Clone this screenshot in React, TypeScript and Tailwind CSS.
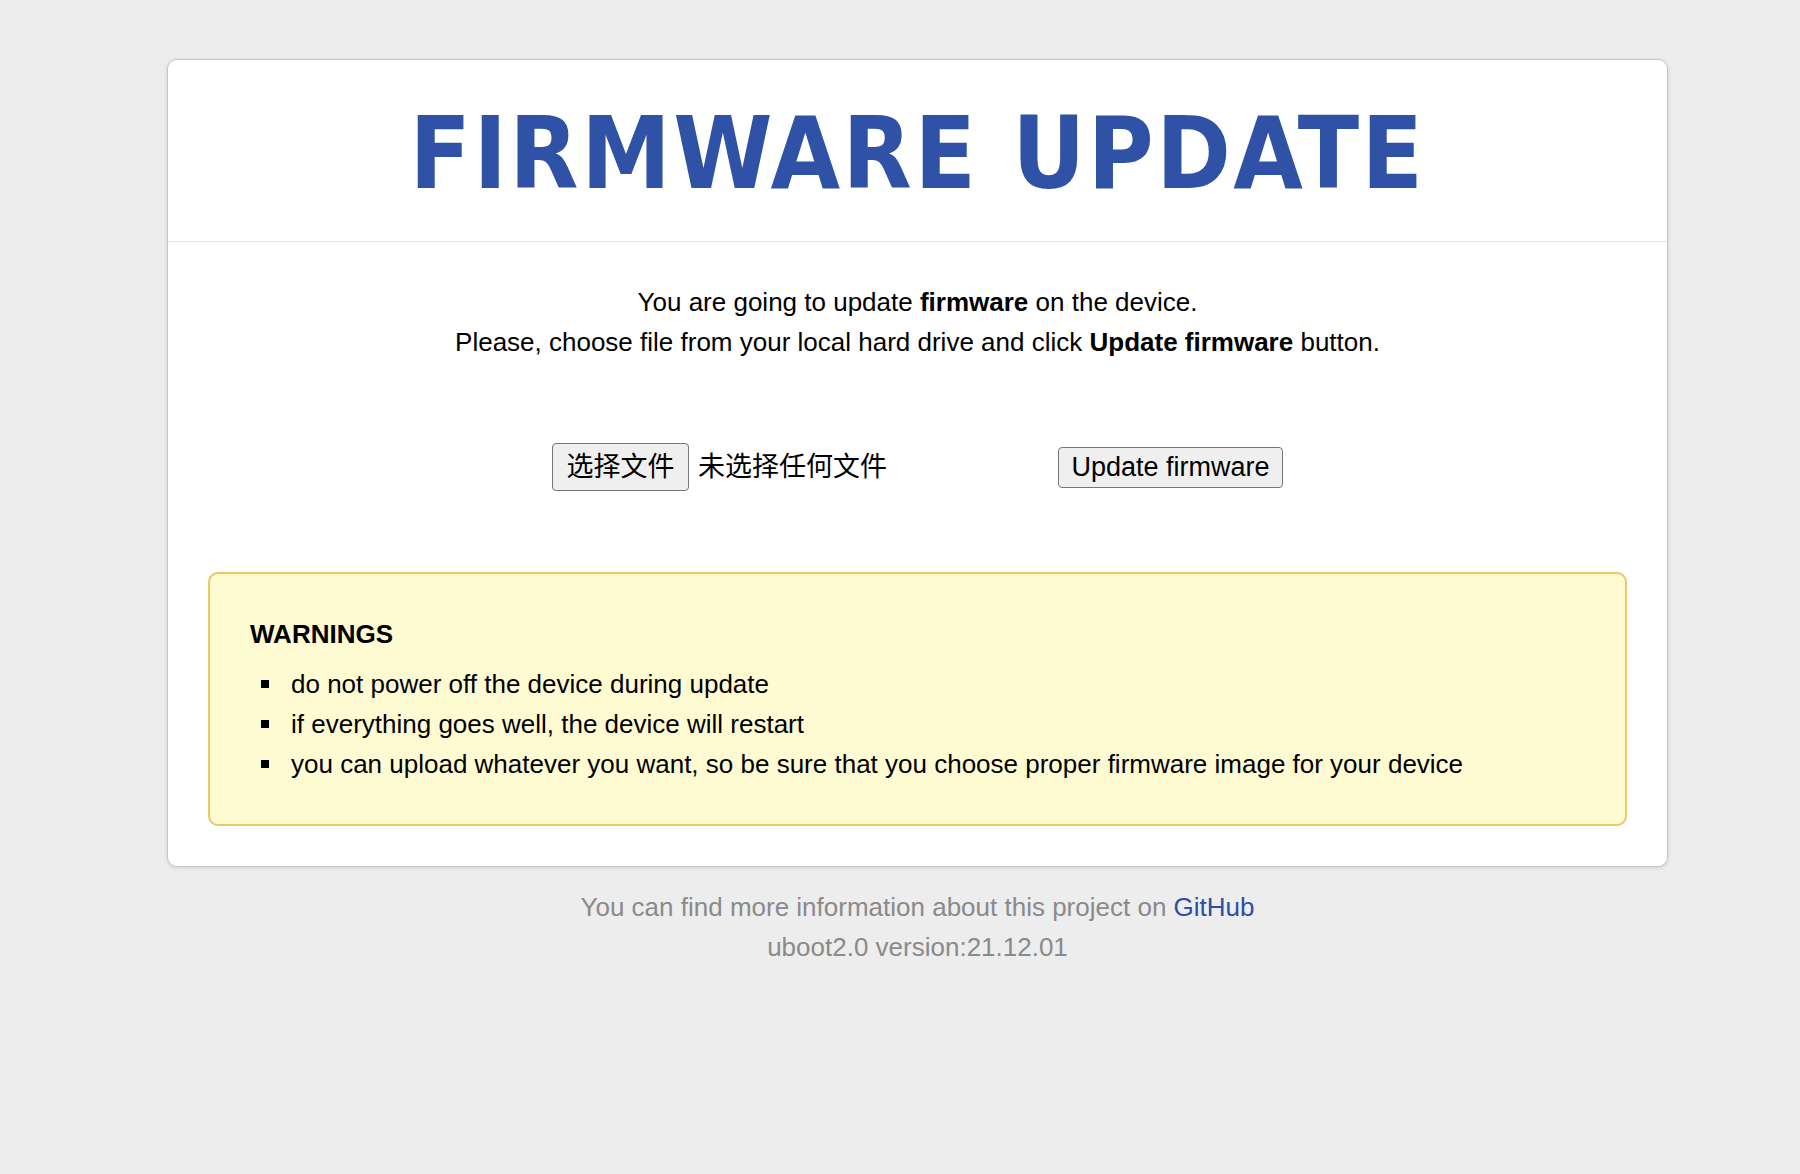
const sans = "font-['Liberation_Sans','Noto_Sans_CJK_SC',Arial,sans-serif]";

const warnings = [
  'do not power off the device during update',
  'if everything goes well, the device will restart',
  'you can upload whatever you want, so be sure that you choose proper firmware image for your device',
];

export default function App() {
  return (
    <div className={`min-h-[1174px] bg-[#ededed] ${sans} text-black`}>
      <div className="pl-[167px] pr-[132px] pt-[59px]">
        <div className="bg-white border border-[#c6c6c6] rounded-[10px] shadow-[0_1px_4px_rgba(0,0,0,0.12)]">
          <div className="h-[182px] pt-[7px] flex items-center justify-center border-b border-[#e2e2e2]">
            <h1 className="font-['DejaVu_Sans',Verdana,sans-serif] font-bold font-stretch-condensed text-[100px] leading-none text-[#2f52a7] tracking-[2.5px]">
              FIRMWARE UPDATE
            </h1>
          </div>

          <div className="px-[40px] pb-[40px]">
            <div className="pt-[40px] text-center text-[26px] leading-[40px]">
              <p>
                You are going to update <b>firmware</b> on the device.
              </p>
              <p>
                Please, choose file from your local hard drive and click <b>Update firmware</b> button.
              </p>
            </div>

            <div className="mt-[81px] flex items-center justify-center">
              <button className="h-[48px] w-[137px] bg-[#efefef] border border-[#767676] rounded-[4px] text-[27px] leading-none">
                选择文件
              </button>
              <span className="ml-[9px] w-[196px] text-[27px]">未选择任何文件</span>
              <button className="ml-[164px] h-[41px] w-[225px] bg-[#efefef] border border-[#767676] rounded-[4px] text-[27px] leading-none">
                Update firmware
              </button>
            </div>

            <div className="mt-[81px] bg-[#fefbd2] border-2 border-[#eec765] rounded-[10px] pl-[40px] pr-[40px] pt-[40px] pb-[40px]">
              <h3 className="font-bold text-[26px] leading-[40px]">WARNINGS</h3>
              <ul className="mt-[10px]">
                {warnings.map((w) => (
                  <li key={w} className="flex items-center text-[26px] leading-[40px]">
                    <span className="ml-[11px] w-[8px] h-[8px] bg-black shrink-0" />
                    <span className="ml-[22px]">{w}</span>
                  </li>
                ))}
              </ul>
            </div>
          </div>
        </div>

        <div className="pt-[20px] text-center text-[26px] leading-[40px] text-[#8a8a8a]">
          <p>
            You can find more information about this project on{' '}
            <a href="#" className="text-[#2c50a5]">GitHub</a>
          </p>
          <p>uboot2.0 version:21.12.01</p>
        </div>
      </div>
    </div>
  );
}
